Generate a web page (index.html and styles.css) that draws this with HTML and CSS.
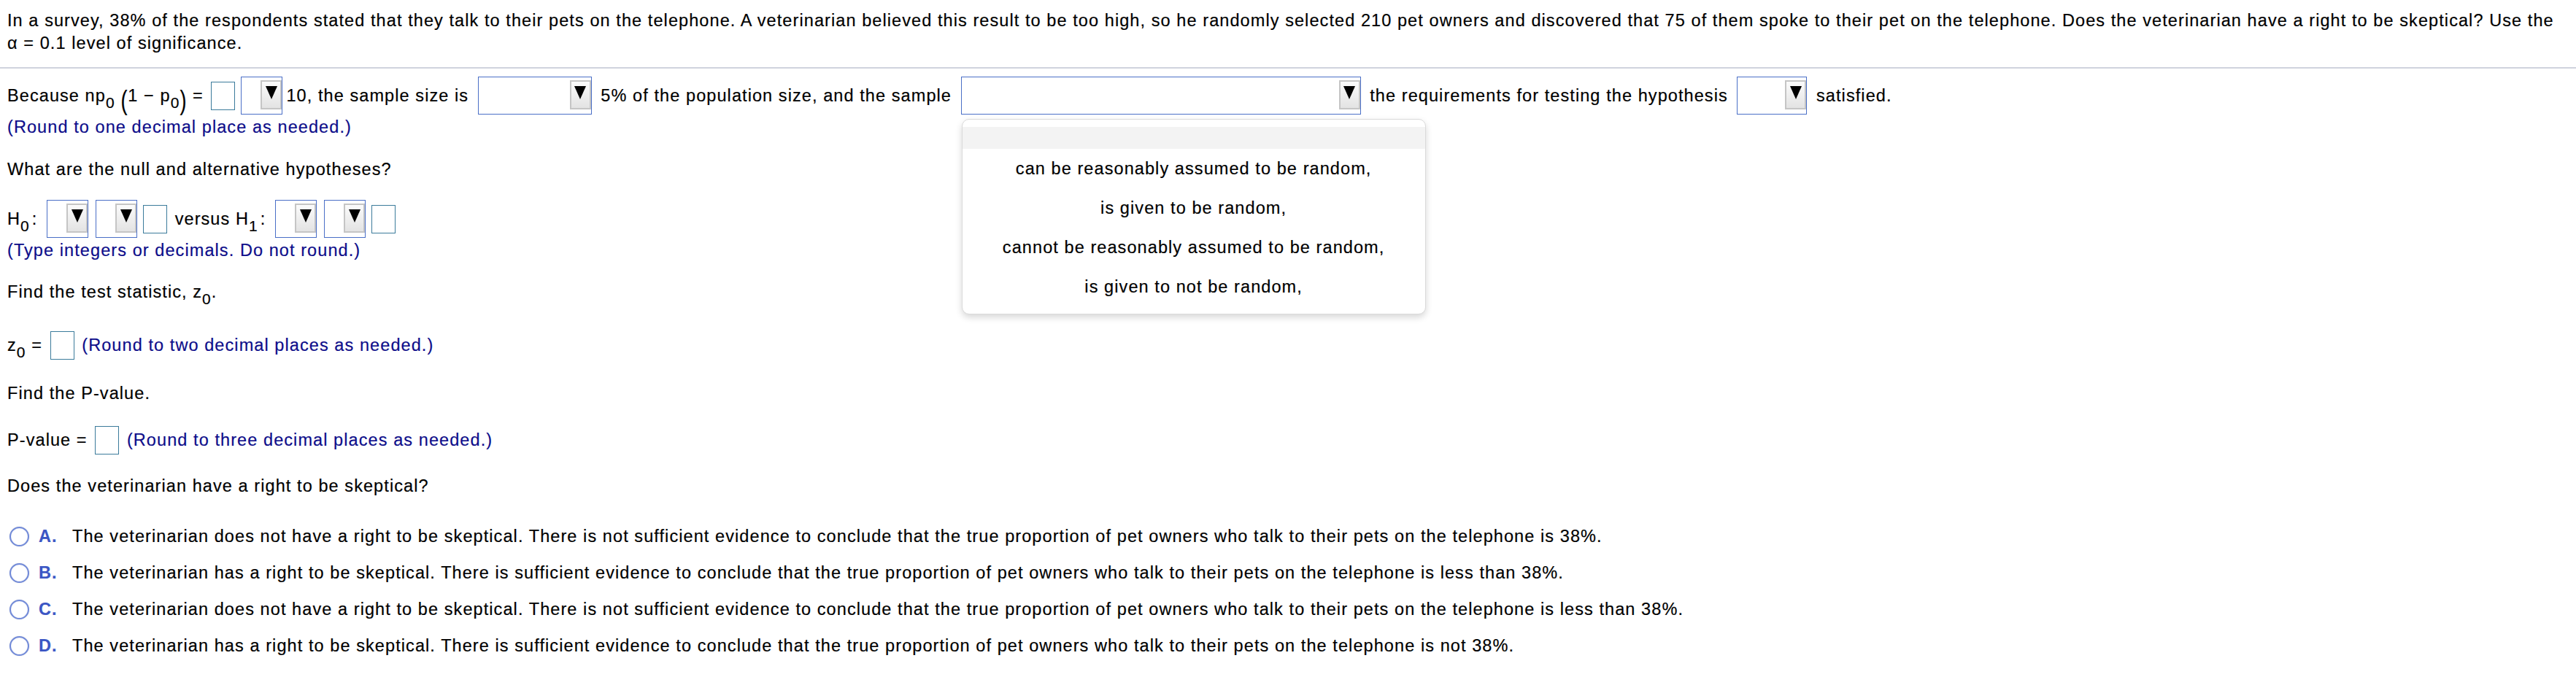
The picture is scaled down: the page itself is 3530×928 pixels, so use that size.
FILE: index.html
```html
<!DOCTYPE html>
<html lang="en">
<head>
<meta charset="utf-8">
<title>Hypothesis test</title>
<link rel="stylesheet" href="styles.css">
</head>
<body>
<div class="page">
  <p class="intro">In a survey, 38% of the respondents stated that they talk to their pets on the telephone. A veterinarian believed this result to be too high, so he randomly selected 210 pet owners and discovered that 75 of them spoke to their pet on the telephone. Does the veterinarian have a right to be skeptical? Use the α = 0.1 level of significance.</p>
  <hr class="rule">

  <div class="row row-first">Because np<span class="sub">0</span> <span class="paren">(</span>1 − p<span class="sub">0</span><span class="paren">)</span> = <span class="inp"></span><span class="sel w-sm"><span class="btn"></span></span>10, the sample size is <span class="sel w-md"><span class="btn"></span></span> 5% of the population size, and the sample <span class="sel w-lg"><span class="btn"></span><span class="menu"><span class="menu-blank"></span><span class="menu-opt">can be reasonably assumed to be random,</span><span class="menu-opt">is given to be random,</span><span class="menu-opt">cannot be reasonably assumed to be random,</span><span class="menu-opt">is given to not be random,</span></span></span> the requirements for testing the hypothesis <span class="sel w-xs"><span class="btn"></span></span> satisfied.</div>
  <div class="hint">(Round to one decimal place as needed.)</div>

  <div class="text q-hyp">What are the null and alternative hypotheses?</div>
  <div class="row row-hyp">H<span class="sub">0</span><span class="colon">:</span> <span class="sel w-sm"><span class="btn"></span></span><span class="sel w-sm"><span class="btn"></span></span><span class="inp"></span> versus H<span class="sub">1</span><span class="colon">:</span> <span class="sel w-sm"><span class="btn"></span></span><span class="sel w-sm"><span class="btn"></span></span><span class="inp"></span></div>
  <div class="hint">(Type integers or decimals. Do not round.)</div>

  <div class="text q-stat">Find the test statistic, z<span class="sub">0</span>.</div>
  <div class="row row-z">z<span class="sub">0</span> = <span class="inp"></span> <span class="note">(Round to two decimal places as needed.)</span></div>

  <div class="text q-p">Find the P-value.</div>
  <div class="row row-p">P-value = <span class="inp"></span> <span class="note">(Round to three decimal places as needed.)</span></div>

  <div class="text q-skep">Does the veterinarian have a right to be skeptical?</div>
  <div class="choices">
    <div class="choice"><span class="radio"></span><span class="letter">A.</span><span class="choice-text">The veterinarian does not have a right to be skeptical. There is not sufficient evidence to conclude that the true proportion of pet owners who talk to their pets on the telephone is 38%.</span></div>
    <div class="choice"><span class="radio"></span><span class="letter">B.</span><span class="choice-text">The veterinarian has a right to be skeptical. There is sufficient evidence to conclude that the true proportion of pet owners who talk to their pets on the telephone is less than 38%.</span></div>
    <div class="choice"><span class="radio"></span><span class="letter">C.</span><span class="choice-text">The veterinarian does not have a right to be skeptical. There is not sufficient evidence to conclude that the true proportion of pet owners who talk to their pets on the telephone is less than 38%.</span></div>
    <div class="choice"><span class="radio"></span><span class="letter">D.</span><span class="choice-text">The veterinarian has a right to be skeptical. There is sufficient evidence to conclude that the true proportion of pet owners who talk to their pets on the telephone is not 38%.</span></div>
  </div>
</div>
</body>
</html>
```

FILE: styles.css
```css
* { box-sizing: border-box; }
html, body { margin: 0; background: #fff; }
body {
  font-family: "Liberation Sans", Arial, sans-serif;
  font-size: 23.5px;
  letter-spacing: 1.08px;
  line-height: 31px;
  color: #000;
  -webkit-text-stroke: 0.2px currentColor;
}
.page { padding: 13px 15px 0 10px; }
p { margin: 0; }

.rule {
  border: 0;
  height: 2px;
  background: #d0d3de;
  margin: 17px -15px 0 -10px;
}

.row { white-space: nowrap; }
.row-first { margin-top: 11px; }
.hint { color: #0d0d8a; margin-top: 2px; }
.note { color: #0d0d8a; }
.q-hyp { margin-top: 27px; }
.row-hyp { margin-top: 26px; }
.q-stat { margin-top: 26px; }
.row-z { margin-top: 38px; }
.q-p { margin-top: 31px; }
.row-p { margin-top: 29px; }
.q-skep { margin-top: 28px; }

.sub {
  font-size: 21px;
  line-height: 0;
  vertical-align: -9px;
}
.colon { margin-left: 3px; }

.paren {
  display: inline-block;
  font-size: 30px;
  line-height: 1;
  letter-spacing: 0;
  vertical-align: -9px;
  transform: scale(0.9, 1.22);
}

/* text entry box */
.inp {
  display: inline-block;
  width: 33px;
  height: 39px;
  border: 1.5px solid #3b7b9b;
  background: #fff;
  margin: 0 3px;
  vertical-align: -12px;
}

/* custom drop-down */
.sel {
  display: inline-block;
  position: relative;
  height: 52px;
  border: 1.5px solid #4a6fc7;
  background: #fff;
  padding-top: 4px;
  margin: 0 5px;
  vertical-align: -18.5px;
}
.w-sm { width: 57px; }
.w-md { width: 156px; }
.w-lg { width: 548px; }
.w-xs { width: 96px; }

.btn {
  display: block;
  width: 29px;
  height: 40px;
  margin-left: auto;
  border: 2px solid #c5c5c5;
  background: linear-gradient(#fbfbfb, #e3e3e3);
}
.btn::after {
  content: "";
  display: block;
  width: 0;
  height: 0;
  margin: 6px auto 0;
  border-left: 8px solid transparent;
  border-right: 8px solid transparent;
  border-top: 18px solid #000;
}

.menu {
  display: block;
  position: absolute;
  left: 0;
  top: calc(100% + 7px);
  width: 636px;
  padding: 10px 0;
  background: #fff;
  border: 1px solid #dadada;
  border-radius: 10px;
  box-shadow: 0 4px 10px rgba(0, 0, 0, 0.16);
  z-index: 5;
}
.menu-blank { display: block; height: 30px; background: #f3f3f3; }
.menu-opt { display: block; line-height: 54px; text-align: center; }

.choices { margin-top: 28px; }
.choice {
  display: flex;
  align-items: center;
  height: 50px;
  white-space: nowrap;
}
.radio {
  flex: none;
  width: 27px;
  height: 27px;
  margin-left: 3px;
  border-radius: 50%;
  border: 2.5px solid #7089d8;
  background: #fff;
  box-shadow: 0 0 2px rgba(0, 0, 0, 0.12), inset 0 0 1px rgba(60, 90, 200, 0.5);
}
.letter {
  flex: none;
  width: 46px;
  margin-left: 13px;
  font-weight: bold;
  color: #3b56c4;
}
```
